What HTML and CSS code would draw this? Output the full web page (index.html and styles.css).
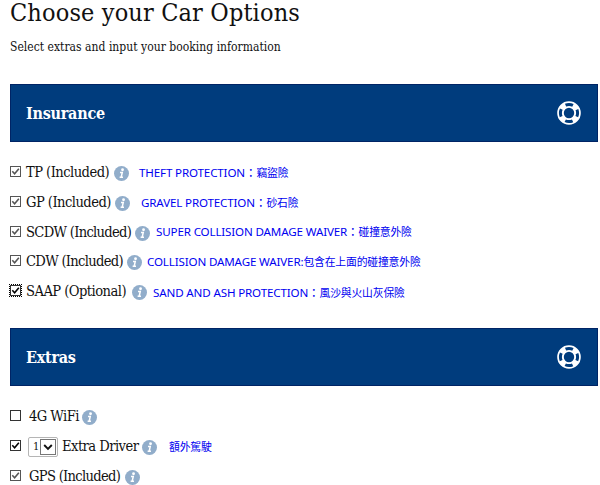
FILE: index.html
```
<!DOCTYPE html>
<html lang="en">
<head>
    <meta charset="UTF-8">
    <meta name="viewport" content="width=device-width, initial-scale=1.0">
    <title>Choose your Car Options</title>
    <link rel="stylesheet" href="styles.css">
</head>
<body>
    <!-- Shared icons -->
    <svg class="sprite" width="0" height="0">
        <symbol id="info" viewBox="0 0 16 16">
            <circle cx="8" cy="8" r="8" fill="#91adca"/>
            <circle cx="9.1" cy="4" r="1.5" fill="#fff"/>
            <path d="M6.4 7h2.4l-1.1 4.7M6 12.1h3.6" fill="none" stroke="#fff" stroke-width="1.6"/>
        </symbol>
        <symbol id="ring" viewBox="0 0 24 24">
            <circle cx="12" cy="12" r="8.5" fill="none" stroke="#fff" stroke-width="6.6"/>
            <circle cx="12" cy="12" r="8.6" fill="none" stroke="#003c7d" stroke-width="3" stroke-dasharray="7.6 5.91" stroke-dashoffset="3.8"/>
        </symbol>
        <symbol id="tick" viewBox="0 0 11 11">
            <path d="M1.6 5.2l2.8 3L9.6 2" fill="none" stroke="currentColor" stroke-width="1.9"/>
        </symbol>
    </svg>

    <div class="container">
        <h1>Choose your Car Options</h1>
        <p class="intro">Select extras and input your booking information</p>

        <!-- Insurance -->
        <div class="section-bar">
            <h2>Insurance</h2>
            <svg class="ring"><use href="#ring"/></svg>
        </div>
        <ul class="options">
            <li class="tp">
                <span class="check locked"><svg><use href="#tick"/></svg></span>
                <span class="label">TP (Included)</span>
                <svg class="info"><use href="#info"/></svg>
                <span class="note">THEFT PROTECTION：<span class="zh">竊盜險</span></span>
            </li>
            <li class="gp">
                <span class="check locked"><svg><use href="#tick"/></svg></span>
                <span class="label">GP (Included)</span>
                <svg class="info"><use href="#info"/></svg>
                <span class="note">GRAVEL PROTECTION：<span class="zh">砂石險</span></span>
            </li>
            <li class="scdw">
                <span class="check locked"><svg><use href="#tick"/></svg></span>
                <span class="label">SCDW (Included)</span>
                <svg class="info"><use href="#info"/></svg>
                <span class="note">SUPER COLLISION DAMAGE WAIVER：<span class="zh">碰撞意外險</span></span>
            </li>
            <li class="cdw">
                <span class="check locked"><svg><use href="#tick"/></svg></span>
                <span class="label">CDW (Included)</span>
                <svg class="info"><use href="#info"/></svg>
                <span class="note">COLLISION DAMAGE WAIVER:<span class="zh">包含在上面的碰撞意外險</span></span>
            </li>
            <li class="saap">
                <span class="check focused"><svg><use href="#tick"/></svg></span>
                <span class="label">SAAP (Optional)</span>
                <svg class="info"><use href="#info"/></svg>
                <span class="note">SAND AND ASH PROTECTION：<span class="zh">風沙與火山灰保險</span></span>
            </li>
        </ul>

        <!-- Extras -->
        <div class="section-bar">
            <h2>Extras</h2>
            <svg class="ring"><use href="#ring"/></svg>
        </div>
        <ul class="options extras">
            <li class="wifi">
                <span class="check"></span>
                <span class="label">4G WiFi</span>
                <svg class="info"><use href="#info"/></svg>
            </li>
            <li class="driver">
                <span class="check"><svg><use href="#tick"/></svg></span>
                <span class="select">1<span class="arrow"><svg viewBox="0 0 14 14"><path d="M3.2 5l3.8 3.8L10.8 5" fill="none" stroke="#111" stroke-width="1.9"/></svg></span></span>
                <span class="label">Extra Driver</span>
                <svg class="info"><use href="#info"/></svg>
                <span class="note"><span class="zh">額外駕駛</span></span>
            </li>
            <li class="gps">
                <span class="check locked"><svg><use href="#tick"/></svg></span>
                <span class="label">GPS (Included)</span>
                <svg class="info"><use href="#info"/></svg>
            </li>
        </ul>
    </div>
</body>
</html>
```
FILE: styles.css
```
* {
    margin: 0;
    padding: 0;
    box-sizing: border-box;
}
body {
    font-family: "Roboto Slab", "DejaVu Serif Condensed", "DejaVu Serif", serif;
    font-stretch: condensed;
    background: #fff;
    color: #111;
}
.sprite {
    display: block;
}
.container {
    width: 598px;
    height: 485px;
    padding: 0 0 0 10px;
}
h1 {
    height: 37px;
    font-size: 25px;
    font-weight: 400;
    line-height: 25px;
    letter-spacing: 0.15px;
    white-space: nowrap;
}
.intro {
    height: 47px;
    font-size: 12px;
    line-height: 20px;
    letter-spacing: 0.02px;
    white-space: nowrap;
}
.section-bar {
    display: flex;
    align-items: center;
    justify-content: space-between;
    height: 58px;
    padding: 0 16px 0 15px;
    background: #003c7d;
    border: 1px solid #002465;
    color: #fff;
}
h2 {
    font-size: 16px;
    letter-spacing: -0.25px;
}
.ring {
    width: 24px;
    height: 24px;
}
.options {
    height: 186px;
    padding-top: 15px;
    list-style: none;
}
.options li {
    display: flex;
    align-items: center;
    height: 29.7px;
    font-size: 14.6px;
    white-space: nowrap;
}
.check {
    flex: none;
    width: 11px;
    height: 11px;
    margin-right: 5px;
    border: 1px solid #333;
    color: #000;
}
.check svg {
    display: block;
    width: 9px;
    height: 9px;
}
.locked {
    border-color: #555;
    color: #555;
}
.focused {
    outline: 1px dotted #000;
}
.label {
    flex: none;
    letter-spacing: -0.55px;
}
.info {
    flex: none;
    width: 15px;
    height: 15px;
    margin-top: 4px;
}
.note {
    margin: 2px 0 0 10px;
    font-family: "Noto Sans", "Noto Sans CJK TC", sans-serif;
    font-stretch: normal;
    font-size: 11.6px;
    line-height: 16px;
    letter-spacing: -0.15px;
    color: #0000f0;
}
.zh {
    font-size: 10.8px;
}

/* label column widths */
.tp .label {
    width: 88px;
}
.gp .label {
    width: 89px;
}
.scdw .label {
    width: 109px;
    letter-spacing: -0.7px;
}
.cdw .label {
    width: 101px;
    letter-spacing: -0.7px;
}
.saap .label {
    width: 106px;
}
.gp .note {
    margin-left: 11px;
}
.scdw .note {
    margin-left: 6px;
}
.cdw .note {
    margin-left: 5px;
}
.saap .note {
    margin: 4px 0 0 6px;
}

.extras {
    height: 105px;
}
.extras .check {
    margin-right: 8px;
}
.wifi .label {
    width: 53px;
}
.driver .label {
    width: 80px;
}
.gps .label {
    width: 96px;
    letter-spacing: -0.7px;
}
.driver .note {
    margin-left: 12px;
}
.select {
    display: flex;
    flex: none;
    align-items: center;
    justify-content: space-between;
    width: 30px;
    height: 20px;
    margin: 2px 4px 0 -1px;
    padding: 0 1px 0 4px;
    border: 1px solid #b5b5b5;
    border-radius: 2px;
    font-size: 11px;
}
.arrow {
    width: 16px;
    height: 16px;
    border: 1px solid #777;
}
.arrow svg {
    display: block;
    width: 14px;
    height: 14px;
}
```
